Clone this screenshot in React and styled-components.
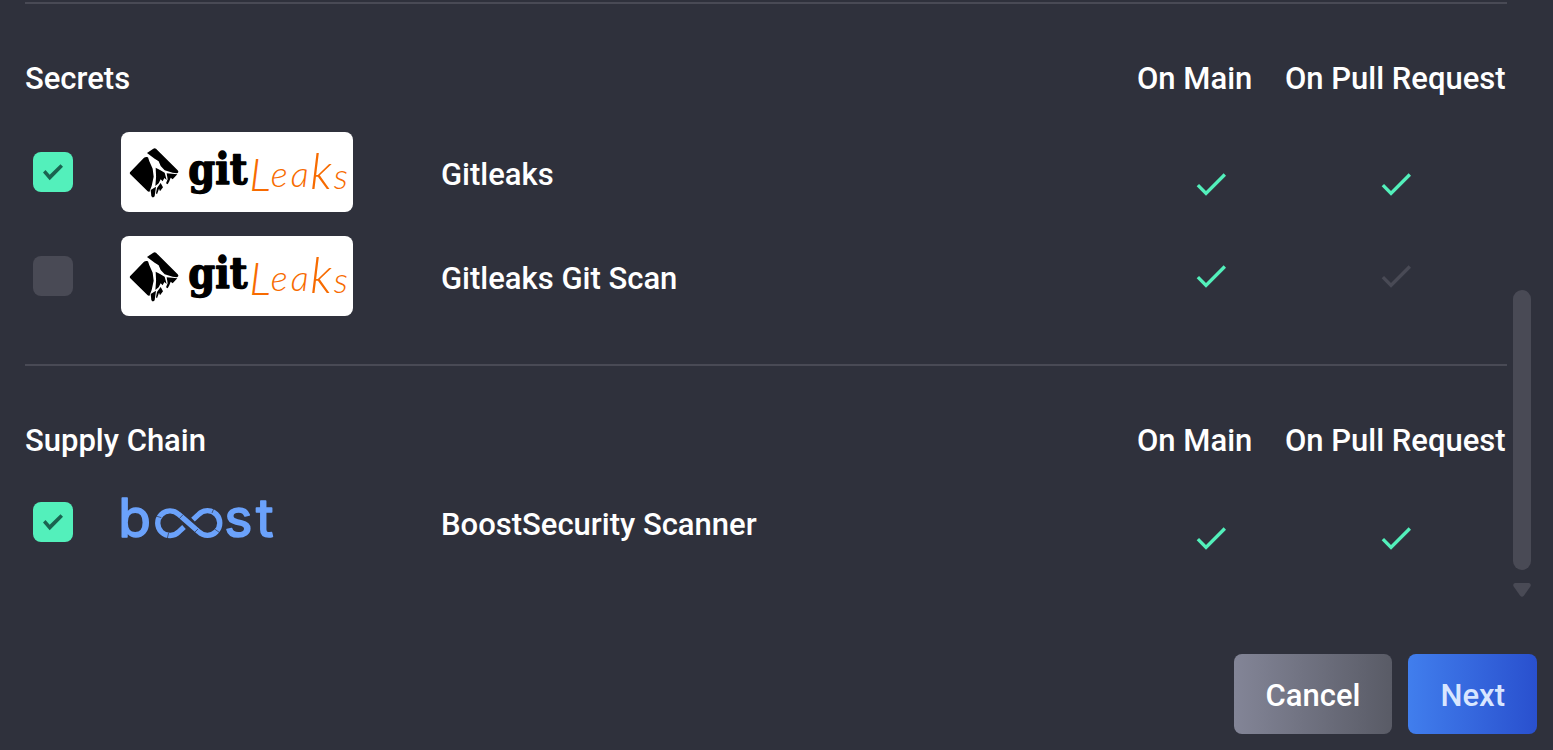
import React, { useState } from 'react';
import styled, { createGlobalStyle } from 'styled-components';

const GlobalStyle = createGlobalStyle`
  * {
    box-sizing: border-box;
  }
  body {
    margin: 0;
    background: #2f313c;
    color: #fff;
    font-family: 'Roboto', 'Liberation Sans', sans-serif;
    font-size: 31px;
    font-weight: 500;
    line-height: 42px;
  }
`;

const GitleaksLogo = () => (
  <LogoCard>
    <svg width="232" height="80" viewBox="33 36 696 240" role="img" aria-label="Gitleaks logo">
      <path d="M60 157L102 113Q108 109 114 112L118 124L128 146L131 170L125 198L118 216L113 214L61 163Q58 160 60 157Z" />
      <path d="M111 99L130 86Q134 83 138 86L203 151Q208 157 201 160L188 158L164 151L152 138L146 124L134 116Z" />
      <path d="M137 143L150 150L164 158L170 180L163 174L158 184L152 178L146 190L136 198Q140 170 137 143Z" />
      <path d="M170 160L202 163L188 178L182 173L178 184L173 193L168 190L173 178Z" />
      <path d="M122 210L138 200L134 229Q128 236 124 228Z" />
      <path d="M141 204L152 189L159 202L150 214L147 206L141 223L138 220Z" />
      <text
        x="235"
        y="193"
        fontFamily="'DejaVu Serif Condensed', 'DejaVu Serif', serif"
        fontWeight="700"
        fontSize="128"
        stroke="#000"
        strokeWidth="4"
        strokeLinejoin="round"
      >
        git
      </text>
      <text y="212" fill="#f76b00" fontFamily="Lato, sans-serif" fontStyle="italic" fontWeight="300">
        <tspan x="418" fontSize="138">L</tspan>
        <tspan x="482" y="202" fontSize="108">e</tspan>
        <tspan x="542" y="202" fontSize="108">a</tspan>
        <tspan x="601" y="208" fontSize="146">k</tspan>
        <tspan x="671" y="208" fontSize="108">s</tspan>
      </text>
    </svg>
  </LogoCard>
);

const BoostLogo = () => (
  <BoostSvg width="232" height="80" viewBox="33 -9 696 240" role="img" aria-label="Boost logo">
    <g
      fill="#6ba2fb"
      stroke="#6ba2fb"
      strokeWidth="5"
      strokeLinejoin="round"
      fontFamily="Inter, sans-serif"
      fontWeight="400"
      fontSize="160"
    >
      <text x="25" y="157">b</text>
      <text x="343" y="157">s<tspan x="438">t</tspan></text>
    </g>
    <path
      d="M222 126L207 140A37 37 0 1 1 206 88L266 140A37 37 0 1 0 266 88L249 104"
      fill="none"
      stroke="#6ba2fb"
      strokeWidth="16"
    />
    <path
      d="M138 93L154 98M176 143L172 160M219 89L208 101M264 132L253 143M312 69L306 84M315 133L328 142"
      fill="none"
      stroke="#2f313c"
      strokeWidth="2"
    />
  </BoostSvg>
);

const CheckMark = ({ active, label }) => (
  <MarkIcon viewBox="0 0 24 24" $active={active} role="img" aria-label={label}>
    <path d="M9 16.17L4.83 12l-1.42 1.41L9 19 21 7l-1.41-1.41z" />
  </MarkIcon>
);

const sections = [
  {
    title: 'Secrets',
    scanners: [
      { id: 'gitleaks', name: 'Gitleaks', logo: GitleaksLogo, enabled: true, main: true, pull: true },
      { id: 'gitleaks-git', name: 'Gitleaks Git Scan', logo: GitleaksLogo, enabled: false, main: true, pull: false },
    ],
  },
  {
    title: 'Supply Chain',
    scanners: [
      { id: 'boost', name: 'BoostSecurity Scanner', logo: BoostLogo, enabled: true, main: true, pull: true, compact: true },
    ],
  },
];

const ScannerRow = ({ scanner }) => {
  const [checked, setChecked] = useState(scanner.enabled);
  const Logo = scanner.logo;

  return (
    <Row $compact={scanner.compact}>
      <td>
        <CheckHolder>
          <Checkbox id={scanner.id} checked={checked} onChange={(e) => setChecked(e.target.checked)} />
          {checked && (
            <Tick viewBox="0 0 40 40" aria-hidden="true">
              <path d="M10 20.5L12.5 18L16.7 22.8L27.5 12.2L30 14.7L16.7 28.2Z" />
            </Tick>
          )}
        </CheckHolder>
      </td>
      <td><Logo /></td>
      <NameCell><label htmlFor={scanner.id}>{scanner.name}</label></NameCell>
      <MarkCell><CheckMark active={scanner.main} label={scanner.main ? 'Yes' : 'No'} /></MarkCell>
      <MarkCell><CheckMark active={scanner.pull} label={scanner.pull ? 'Yes' : 'No'} /></MarkCell>
    </Row>
  );
};

const App = () => {
  return (
    <Page>
      <GlobalStyle />
      <Body>
        <Content>
          {sections.map((section) => (
            <Section key={section.title}>
              <ScannerTable>
                <colgroup>
                  <Col $width={96} />
                  <Col $width={320} />
                  <Col />
                  <Col $width={148} />
                  <Col $width={222} />
                </colgroup>
                <thead>
                  <tr>
                    <HeadCell colSpan="3">{section.title}</HeadCell>
                    <HeadCell>On Main</HeadCell>
                    <HeadCell>On Pull Request</HeadCell>
                  </tr>
                </thead>
                <tbody>
                  {section.scanners.map((scanner) => (
                    <ScannerRow key={scanner.id} scanner={scanner} />
                  ))}
                </tbody>
              </ScannerTable>
            </Section>
          ))}
        </Content>
        <ScrollRail>
          <ScrollThumb />
          <svg width="18" height="14" viewBox="0 0 18 14" aria-hidden="true">
            <path d="M2 0H16Q19 1 17 4L11 12.500Q9 15 7 12.500L1 4Q-1 1 2 0Z" fill="#494a55" />
          </svg>
        </ScrollRail>
      </Body>
      <Footer>
        <Button type="button">Cancel</Button>
        <Button type="button" $primary>Next</Button>
      </Footer>
    </Page>
  );
};

const Page = styled.div`
  min-height: 100vh;
  display: flex;
  flex-direction: column;
`;

const Body = styled.main`
  flex: 1;
  display: flex;
  gap: 6px;
  padding: 2px 22px 0 25px;
`;

const Content = styled.div`
  flex: 1;
  min-width: 0;
`;

const Section = styled.section`
  border-top: 2px solid #494a55;
  padding: 54px 0 36px;
`;

const ScannerTable = styled.table`
  width: 100%;
  table-layout: fixed;
  border-collapse: collapse;
  td, th {
    padding: 0;
  }
`;

const Col = styled.col`
  width: ${({ $width }) => ($width ? `${$width}px` : 'auto')};
`;

const HeadCell = styled.th`
  height: 62px;
  font-weight: 500;
  text-align: left;
  vertical-align: top;
  white-space: nowrap;
`;

const NameCell = styled.td`
  label {
    display: block;
    padding-top: 6px;
  }
`;

const MarkCell = styled.td`
  vertical-align: middle;
`;

const Row = styled.tr`
  height: ${({ $compact }) => ($compact ? '80px' : '104px')};
  &:first-child ${MarkCell} {
    padding-top: ${({ $compact }) => ($compact ? '32px' : '24px')};
  }
`;

const CheckHolder = styled.span`
  display: grid;
  width: 40px;
  margin-left: 8px;
  > * {
    grid-area: 1 / 1;
  }
`;

const Checkbox = styled.input.attrs({ type: 'checkbox' })`
  appearance: none;
  width: 40px;
  height: 40px;
  margin: 0;
  border-radius: 8px;
  background: #494a55;
  cursor: pointer;
  &:checked {
    background: #53f0bb;
  }
`;

const Tick = styled.svg`
  width: 40px;
  height: 40px;
  fill: #1b6350;
  pointer-events: none;
`;

const LogoCard = styled.div`
  display: flex;
  width: 232px;
  background: #fff;
  border-radius: 8px;
  overflow: hidden;
`;

const BoostSvg = styled.svg`
  display: block;
  overflow: visible;
`;

const MarkIcon = styled.svg`
  display: block;
  width: 40px;
  height: 40px;
  margin: 0 auto;
  fill: ${({ $active }) => ($active ? '#53f0bb' : '#494a55')};
`;

const ScrollRail = styled.div`
  width: 18px;
  display: flex;
  flex-direction: column;
  justify-content: flex-end;
  gap: 13px;
  padding-bottom: 25px;
`;

const ScrollThumb = styled.div`
  height: 280px;
  border-radius: 9px;
  background: #494a55;
`;

const Footer = styled.footer`
  display: flex;
  justify-content: flex-end;
  gap: 16px;
  padding: 32px 16px 16px;
`;

const Button = styled.button`
  height: 80px;
  padding: 4px 32px 0;
  border: 0;
  border-radius: 8px;
  font: inherit;
  color: ${({ $primary }) => ($primary ? '#d8e6ff' : '#fff')};
  background: ${({ $primary }) => ($primary
    ? 'linear-gradient(90deg, #417eed, #2950ce)'
    : 'linear-gradient(90deg, #838597, #595b66)')};
  cursor: pointer;
`;

export default App;
